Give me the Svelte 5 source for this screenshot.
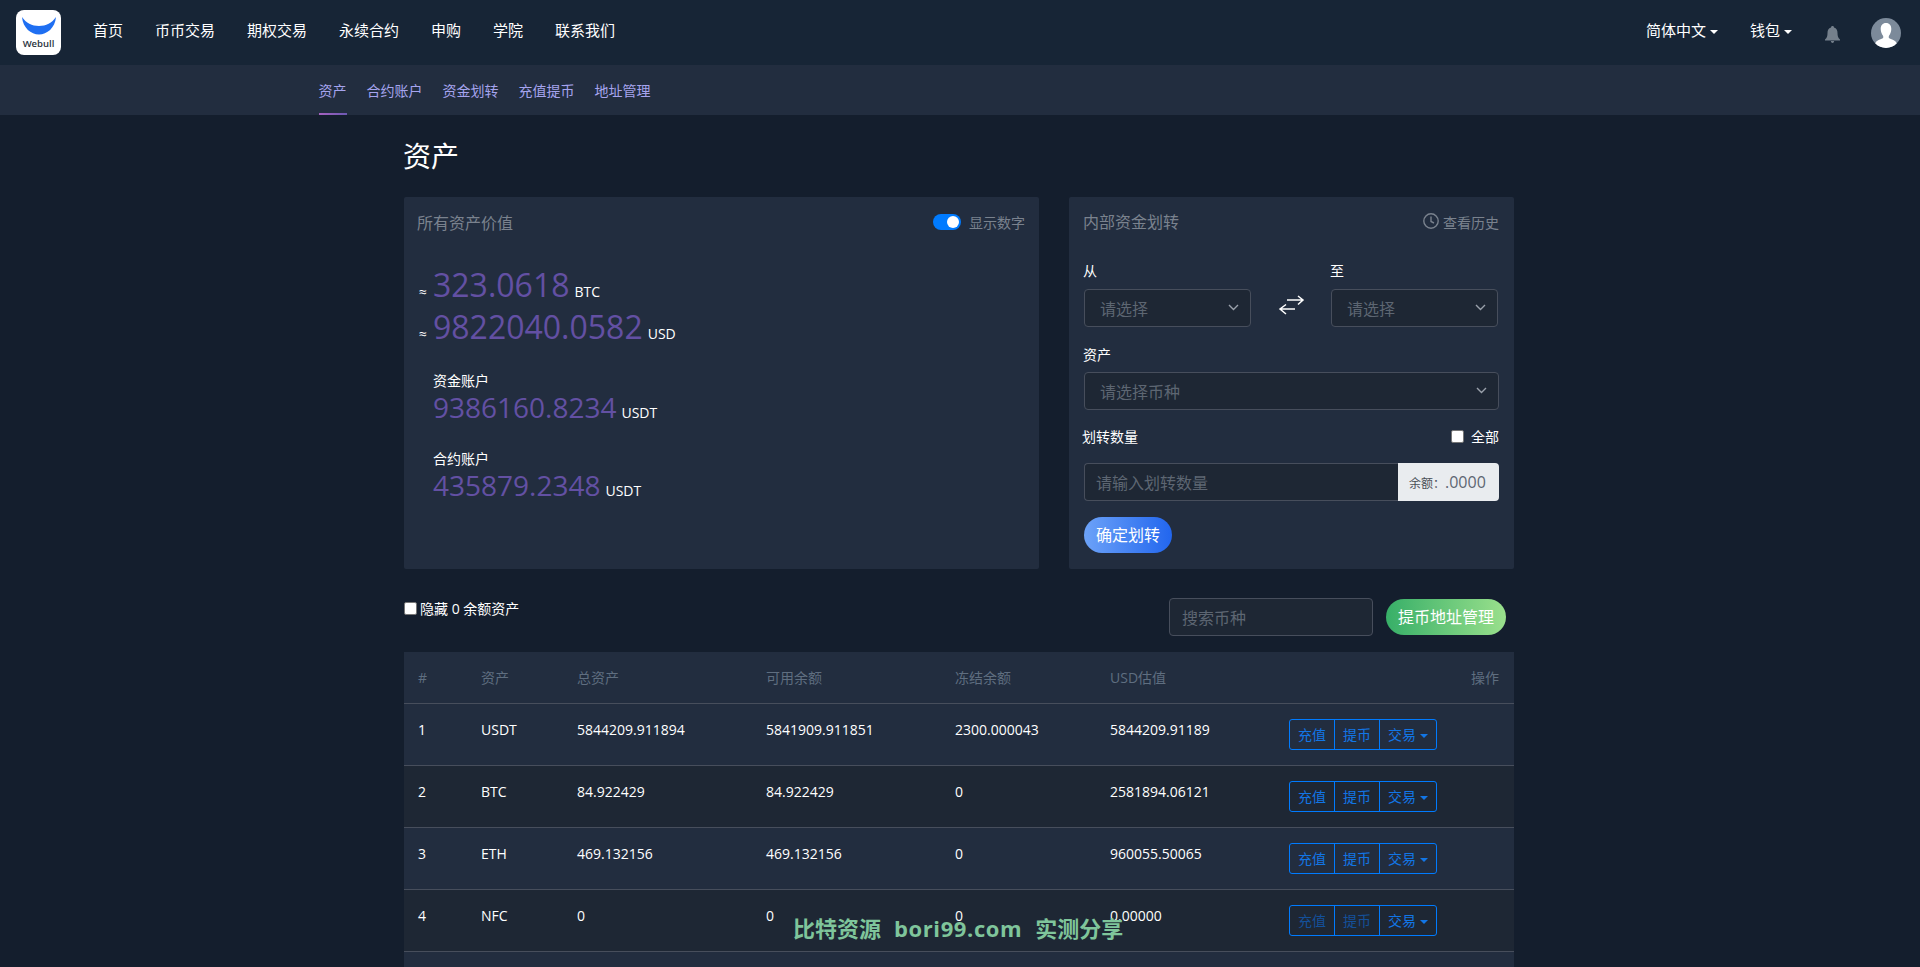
<script>
  const navLinks = ["首页", "币币交易", "期权交易", "永续合约", "申购", "学院", "联系我们"];
  const subLinks = ["资产", "合约账户", "资金划转", "充值提币", "地址管理"];
  const columns = ["#", "资产", "总资产", "可用余额", "冻结余额", "USD估值"];

  const rows = [
    { id: 1, coin: "USDT", total: "5844209.911894", free: "5841909.911851", frozen: "2300.000043", usd: "5844209.91189" },
    { id: 2, coin: "BTC", total: "84.922429", free: "84.922429", frozen: "0", usd: "2581894.06121" },
    { id: 3, coin: "ETH", total: "469.132156", free: "469.132156", frozen: "0", usd: "960055.50065" },
    { id: 4, coin: "NFC", total: "0", free: "0", frozen: "0", usd: "0.00000", disabled: true },
  ];
</script>

<header class="topbar">
  <div class="logo">
    <svg width="36" height="18" viewBox="0 0 36 18">
      <path d="M1 0 C2 11 10 17.500 18 17.500 C26 17.500 34 11 35 0 C31 6 25 9 18 9 C11 9 5 6 1 0 Z" fill="#1f6ff2" />
    </svg>
    <span>Webull</span>
  </div>
  <nav class="mainnav">
    {#each navLinks as link}
      <a href="#top">{link}</a>
    {/each}
  </nav>
  <div class="right">
    <a href="#top" class="drop">简体中文<i class="caret"></i></a>
    <a href="#top" class="drop">钱包<i class="caret"></i></a>
    <svg class="bell" width="15" height="17" viewBox="0 0 15 17">
      <path d="M7.500 0 C8.500 0 9 .7 9 1.600 C11.500 2.400 12.500 4.500 12.500 7 C12.500 10 13 12 15 13.500 L15 14.500 L0 14.500 L0 13.500 C2 12 2.500 10 2.500 7 C2.500 4.500 3.500 2.400 6 1.600 C6 .7 6.500 0 7.500 0 Z M5.800 15 L9.200 15 C9 16.200 8.300 17 7.500 17 C6.700 17 6 16.200 5.800 15 Z" fill="#75808c" />
    </svg>
    <svg class="avatar" width="30" height="30" viewBox="0 0 30 30">
      <circle cx="15" cy="15" r="15" fill="#7c8a9a" />
      <clipPath id="avatarClip"><circle cx="15" cy="15" r="15" /></clipPath>
      <path clip-path="url(#avatarClip)" d="M15 5 C18.500 5 20.300 7.500 20.300 11 C20.300 14 19 16.500 17.800 18 L17.800 20 C20 21.500 25 22 26 26 L26 30 L4 30 L4 26 C5 22 10 21.500 12.200 20 L12.200 18 C11 16.500 9.700 14 9.700 11 C9.700 7.500 11.500 5 15 5 Z" fill="#fff" />
    </svg>
  </div>
</header>

<nav class="subnav">
  {#each subLinks as link, i}
    <a href="#top" class:active={i === 0}>{link}</a>
  {/each}
</nav>

<main>
  <h1>资产</h1>

  <section class="cards">
    <div class="card values">
      <div class="card-head">
        <span class="card-title">所有资产价值</span>
        <span class="toggle-wrap"><i class="toggle"></i>显示数字</span>
      </div>
      <p class="sum first"><small>≈</small><b>323.0618</b><span>BTC</span></p>
      <p class="sum"><small>≈</small><b>9822040.0582</b><span>USD</span></p>
      <div class="account first-account">
        <label for="none">资金账户</label>
        <p><b>9386160.8234</b><span>USDT</span></p>
      </div>
      <div class="account">
        <label for="none">合约账户</label>
        <p><b>435879.2348</b><span>USDT</span></p>
      </div>
    </div>

    <div class="card transfer">
      <div class="card-head">
        <span class="card-title">内部资金划转</span>
        <span class="history">
          <svg width="16" height="16" viewBox="0 0 16 16" fill="none" stroke="#7a828e" stroke-width="1.400">
            <circle cx="8" cy="8" r="7.200" />
            <path d="M8 3.500 L8 8.500 L11 10" />
          </svg>
          查看历史
        </span>
      </div>

      <div class="from-to">
        <div class="field">
          <span class="lab">从</span>
          <div class="select">请选择<svg class="chev" width="11" height="7" viewBox="0 0 11 7"><path d="M1 1 L5.500 5.500 L10 1" /></svg></div>
        </div>
        <svg class="swap" width="27" height="20" viewBox="0 0 27 20" fill="none" stroke="#fff" stroke-width="1.500">
          <path d="M9 5 L25 5 M20 1 L25 5 L20 9.500" />
          <path d="M17 14 L3 14 M8 9.500 L2 14 L8 19" />
        </svg>
        <div class="field">
          <span class="lab">至</span>
          <div class="select">请选择<svg class="chev" width="11" height="7" viewBox="0 0 11 7"><path d="M1 1 L5.500 5.500 L10 1" /></svg></div>
        </div>
      </div>

      <span class="lab asset-lab">资产</span>
      <div class="select wide">请选择币种<svg class="chev" width="11" height="7" viewBox="0 0 11 7"><path d="M1 1 L5.500 5.500 L10 1" /></svg></div>

      <div class="amount-head">
        <span class="lab">划转数量</span>
        <span class="all"><i class="box"></i>全部</span>
      </div>
      <div class="amount">
        <div class="amount-input">请输入划转数量</div>
        <div class="addon"><small>余额：</small>.0000</div>
      </div>
      <button class="confirm">确定划转</button>
    </div>
  </section>

  <section class="toolbar">
    <span class="hide-zero"><i class="box"></i>隐藏 0 余额资产</span>
    <div class="tools">
      <div class="search">搜索币种</div>
      <button class="manage">提币地址管理</button>
    </div>
  </section>

  <table>
    <thead>
      <tr>
        {#each columns as col}
          <th>{col}</th>
        {/each}
        <th class="ops">操作</th>
      </tr>
    </thead>
    <tbody>
      {#each rows as row}
        <tr>
          <td>{row.id}</td>
          <td>{row.coin}</td>
          <td>{row.total}</td>
          <td>{row.free}</td>
          <td>{row.frozen}</td>
          <td>{row.usd}</td>
          <td>
            <div class="btn-group">
              <a href="#top" class:off={row.disabled}>充值</a>
              <a href="#top" class:off={row.disabled}>提币</a>
              <a href="#top">交易<i class="caret"></i></a>
            </div>
          </td>
        </tr>
      {/each}
      <tr class="tail"><td colspan="7"></td></tr>
    </tbody>
  </table>
</main>

<div class="watermark">比特资源<span>bori99.com</span>实测分享</div>

<style>
  :global(html), :global(body) {
    margin: 0;
    height: 967px;
    overflow: hidden;
    background: #141e2d;
  }

  :global(body) {
    font-family: "Open Sans", "Noto Sans CJK SC", sans-serif;
    font-size: 14px;
    line-height: 21px;
    color: #fff;
  }

  a {
    color: inherit;
    text-decoration: none;
  }

  .topbar {
    display: flex;
    align-items: center;
    height: 65px;
    background: #172536;
    padding: 0 19px 0 16px;
    font-size: 15px;
  }

  .logo {
    display: flex;
    flex-direction: column;
    align-items: center;
    box-sizing: border-box;
    width: 45px;
    height: 45px;
    padding-top: 7px;
    background: #fff;
    border-radius: 8px;
    color: #2a3340;
  }

  .logo svg {
    display: block;
    flex: none;
  }

  .logo span {
    font-size: 9.500px;
    font-weight: 600;
    line-height: 14px;
    margin-top: 2px;
  }

  .mainnav {
    display: flex;
    gap: 32px;
    margin: 0 0 4px 32px;
  }

  .right {
    display: flex;
    align-items: center;
    margin-left: auto;
  }

  .drop {
    margin: 0 31px 4px 0;
  }

  .drop:first-child {
    margin-right: 32px;
  }

  .caret {
    display: inline-block;
    margin-left: 4px;
    vertical-align: 2px;
    border-top: 4px solid currentColor;
    border-left: 4px solid transparent;
    border-right: 4px solid transparent;
  }

  .bell {
    margin: 4px 31px 0 2px;
  }

  .subnav {
    display: flex;
    gap: 20px;
    height: 50px;
    padding-left: 318.500px;
    background: #222d3f;
    color: #a6a4ee;
  }

  .subnav a {
    box-sizing: border-box;
    height: 50px;
    padding-top: 15px;
  }

  .subnav .active {
    border-bottom: 2px solid;
    border-image: linear-gradient(90deg, #a862c0, #6a58b2) 1;
  }

  main {
    width: 1110px;
    margin-left: 404px;
  }

  h1 {
    margin: 0 0 0 -1px;
    padding: 21px 0 20px;
    font-size: 28px;
    line-height: 41px;
    font-weight: 400;
  }

  .cards {
    display: flex;
    gap: 30px;
  }

  .card {
    box-sizing: border-box;
    height: 372px;
    background: #222d3f;
    border-radius: 2px;
  }

  .values {
    width: 635px;
    padding: 14px 14px 0 13px;
  }

  .transfer {
    width: 445px;
    padding: 13px 15px 0 14px;
  }

  .card-head {
    display: flex;
    justify-content: space-between;
    align-items: center;
    height: 24px;
  }

  .card-title {
    font-size: 16px;
    color: #7a828e;
  }

  .toggle-wrap {
    display: flex;
    align-items: center;
    gap: 8px;
    color: #7a828e;
    margin-top: -2px;
  }

  .toggle {
    position: relative;
    width: 28px;
    height: 16px;
    border-radius: 8px;
    background: #007bff;
  }

  .toggle::after {
    content: "";
    position: absolute;
    right: 2px;
    top: 2px;
    width: 12px;
    height: 12px;
    border-radius: 50%;
    background: #fff;
  }

  .sum {
    display: flex;
    align-items: baseline;
    margin: 0;
    height: 42px;
    line-height: 42px;
  }

  .sum.first {
    margin-top: 29px;
  }

  .sum small {
    width: 16px;
    font-size: 14px;
    padding-left: 2px;
    box-sizing: border-box;
  }

  b {
    font-weight: 400;
    color: #6350a3;
    margin-right: 5px;
  }

  .sum b {
    font-size: 32px;
  }

  .account {
    padding-left: 16px;
    margin-top: 19px;
  }

  .first-account {
    margin-top: 22px;
  }

  .account label {
    display: block;
  }

  .account p {
    margin: 0;
    line-height: 33px;
  }

  .account b {
    font-size: 28px;
  }

  .history {
    display: flex;
    align-items: center;
    gap: 4px;
    color: #7a828e;
  }

  .history svg {
    margin-top: -3px;
  }

  .from-to {
    display: flex;
    justify-content: space-between;
    align-items: flex-start;
    margin-top: 26px;
    padding: 0 1px;
  }

  .field {
    width: 167px;
  }

  .swap {
    margin-top: 35px;
  }

  .lab {
    display: block;
    font-weight: 400;
    line-height: 21px;
    margin-left: -1px;
  }

  .from-to .lab {
    margin-bottom: 8px;
  }

  .select {
    position: relative;
    box-sizing: border-box;
    height: 38px;
    padding: 8px 15px;
    background: #1e2734;
    border: 1px solid #474e5c;
    border-radius: 4px;
    font-size: 16px;
    line-height: 22px;
    color: #5d6672;
  }

  .chev {
    position: absolute;
    right: 11px;
    top: 14px;
    fill: none;
    stroke: #9aa1ab;
    stroke-width: 1.400;
  }

  .asset-lab {
    margin: 17px 0 7px;
  }

  .wide {
    width: 415px;
    margin-left: 1px;
  }

  .amount-head {
    display: flex;
    justify-content: space-between;
    align-items: center;
    margin: 16px 0 16px;
  }

  .all {
    display: flex;
    align-items: center;
    gap: 7px;
  }

  .box {
    box-sizing: border-box;
    display: block;
    width: 13px;
    height: 13px;
    background: #fff;
    border: 1px solid #767676;
    border-radius: 2px;
  }

  .amount {
    display: flex;
    width: 415px;
    height: 38px;
    margin-left: 1px;
  }

  .amount-input {
    flex: 1;
    box-sizing: border-box;
    padding: 8px 11px;
    background: #1e2734;
    border: 1px solid #474e5c;
    border-right: 0;
    border-radius: 4px 0 0 4px;
    font-size: 16px;
    line-height: 22px;
    color: #5d6672;
  }

  .addon {
    box-sizing: border-box;
    width: 101px;
    padding: 0 11px;
    background: #e9ecef;
    border-radius: 0 4px 4px 0;
    font-size: 16px;
    line-height: 38px;
    color: #5d6672;
    white-space: nowrap;
  }

  .addon small {
    font-size: 12px;
    color: #495057;
  }

  button {
    font-family: inherit;
    font-size: 16px;
    line-height: 22px;
    color: #fff;
    border: 0;
    padding: 7px 12px;
    height: 36px;
  }

  .confirm {
    display: block;
    width: 88px;
    margin: 16px 0 0 1px;
    border-radius: 18px;
    background: linear-gradient(90deg, #6ca2f8, #2266ee);
  }

  .toolbar {
    display: flex;
    justify-content: space-between;
    height: 83px;
  }

  .hide-zero {
    display: flex;
    align-items: center;
    gap: 3px;
    height: 21px;
    margin-top: 29px;
  }

  .tools {
    display: flex;
    align-items: flex-start;
    gap: 13px;
    margin: 29px 8px 0 0;
  }

  .search {
    box-sizing: border-box;
    width: 204px;
    height: 38px;
    padding: 8px 12px;
    background: #1e2734;
    border: 1px solid #474e5c;
    border-radius: 4px;
    font-size: 16px;
    line-height: 22px;
    color: #5d6672;
  }

  .manage {
    width: 120px;
    margin-top: 1px;
    border-radius: 18px;
    background: linear-gradient(90deg, #37af68, #9ae08c);
  }

  table {
    width: 1110px;
    table-layout: fixed;
    border-collapse: collapse;
    background: #222d3f;
  }

  th:nth-child(1) { width: 63px; padding-left: 14px; }
  th:nth-child(2) { width: 96px; }
  th:nth-child(3) { width: 189px; }
  th:nth-child(4) { width: 189px; }
  th:nth-child(5) { width: 155px; }
  th:nth-child(6) { width: 179px; }

  th {
    box-sizing: content-box;
    height: 51px;
    padding: 0;
    text-align: left;
    font-weight: 400;
    color: #5f6e80;
    border-bottom: 1px solid #474e5c;
  }

  th.ops {
    text-align: right;
    padding-right: 15px;
  }

  td {
    height: 61px;
    box-sizing: content-box;
    padding: 0;
    vertical-align: top;
    border-bottom: 1px solid #474e5c;
  }

  td:first-child {
    padding-left: 14px;
  }

  td:not(:last-child) {
    padding-top: 15px;
    height: 46px;
  }

  tbody tr:nth-child(even) {
    background: #1e2734;
  }

  .tail td {
    padding: 0;
    height: 61px;
    border: 0;
  }

  .btn-group {
    display: inline-flex;
    height: 31px;
    margin-top: 15px;
    border: 1px solid #007bff;
    border-radius: 3px;
    box-sizing: border-box;
    color: #1276e6;
    line-height: 29px;
  }

  .btn-group a {
    padding: 0 8px;
    border-left: 1px solid #007bff;
  }

  .btn-group a:first-child {
    border-left: 0;
  }

  .btn-group .off {
    color: #14509a;
  }

  .watermark {
    position: absolute;
    left: 793px;
    top: 914px;
    display: flex;
    gap: 13px;
    font-size: 22px;
    line-height: 28px;
    font-weight: 700;
    color: #7fc59b;
    white-space: nowrap;
  }

  .watermark span {
    letter-spacing: .6px;
  }
</style>
